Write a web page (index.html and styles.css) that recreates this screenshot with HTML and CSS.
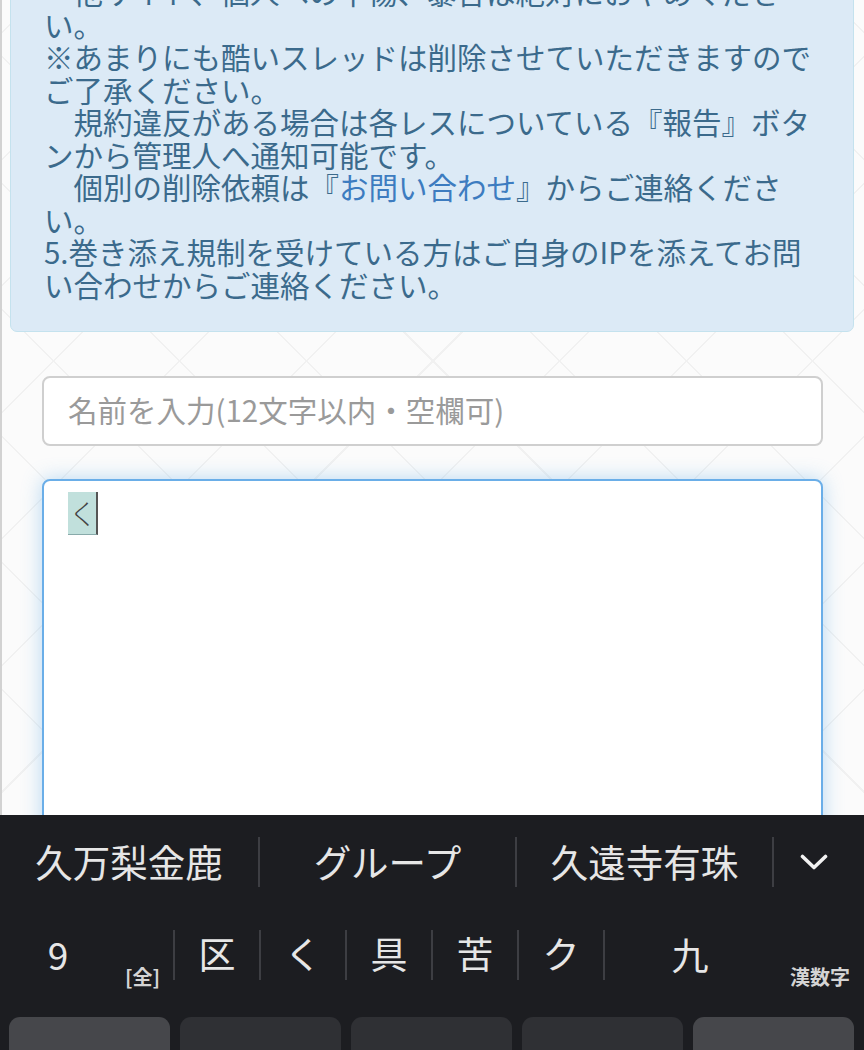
FILE: index.html
```html
<!DOCTYPE html>
<html lang="ja">
<head>
<meta charset="utf-8">
<title>書き込み</title>
<link rel="stylesheet" href="styles.css">
</head>
<body>
<div class="screen">
  <main class="page">
    <div class="content">
      <div class="notice">　他サイト、個人への中傷、暴言は絶対におやめください。<br>※あまりにも酷いスレッドは削除させていただきますのでご了承ください。<br>　規約違反がある場合は各レスについている『報告』ボタンから管理人へ通知可能です。<br>　個別の削除依頼は『<a class="link" href="#">お問い合わせ</a>』からご連絡ください。<br>5.巻き添え規制を受けている方はご自身のIPを添えてお問い合わせからご連絡ください。</div>
      <input class="field name" type="text" placeholder="名前を入力(12文字以内・空欄可)">
      <div class="field body-text"><span class="compose">く</span></div>
    </div>
  </main>
  <div class="keyboard">
    <div class="cands">
      <span class="cand">久万梨金鹿</span>
      <span class="div"></span>
      <span class="cand">グループ</span>
      <span class="div"></span>
      <span class="cand">久遠寺有珠</span>
      <span class="div"></span>
      <span class="cand chev"><svg width="28" height="17" viewBox="0 0 28 17"><polyline points="2.5,2.5 14,13.5 25.5,2.5" fill="none" stroke="#f2f2f2" stroke-width="3.6" stroke-linecap="round" stroke-linejoin="round"/></svg></span>
    </div>
    <div class="conv">
      <span class="seg first"><span class="big">9</span><span class="small">[全]</span></span>
      <span class="div"></span>
      <span class="seg">区</span>
      <span class="div"></span>
      <span class="seg">く</span>
      <span class="div"></span>
      <span class="seg">具</span>
      <span class="div"></span>
      <span class="seg">苦</span>
      <span class="div"></span>
      <span class="seg">ク</span>
      <span class="div"></span>
      <span class="seg last"><span class="big">九</span><span class="small">漢数字</span></span>
    </div>
    <div class="keys">
      <span class="key side"></span>
      <span class="key"></span>
      <span class="key"></span>
      <span class="key"></span>
      <span class="key side"></span>
    </div>
  </div>
</div>
</body>
</html>
```

FILE: styles.css
```css
html, body {
  margin: 0;
  padding: 0;
}

body {
  font-family: "Noto Sans CJK JP", "Noto Sans", sans-serif;
  background: #1c1d21;
}

.screen {
  width: 864px;
  height: 1050px;
  display: flex;
  flex-direction: column;
  overflow: hidden;
}

.page {
  flex: 1;
  overflow: hidden;
  border-left: 2px solid #d2d2d2;
  background-color: #fbfbfb;
  background-image:
    repeating-linear-gradient(45deg, transparent 0, transparent 88px, #f1f1f1 88px, #f1f1f1 89.5px),
    repeating-linear-gradient(-45deg, transparent 0, transparent 88px, #f1f1f1 88px, #f1f1f1 89.5px);
}

.content {
  margin-top: -53px;
  display: flex;
  flex-direction: column;
}

.notice {
  margin: 0 10px 0 8px;
  padding: 27px 33px 31px 33px;
  background: #dceaf6;
  border: 1px solid #c4e2ee;
  border-radius: 7px;
  color: #3b6a8c;
  font-size: 29.5px;
  line-height: 32.5px;
}

.link {
  color: #3d7cc0;
  text-decoration: none;
}

.field {
  box-sizing: border-box;
  margin: 0 41px 0 40px;
  background: #fff;
  border-radius: 8px;
  font-family: "Noto Sans CJK JP", "Noto Sans", sans-serif;
  font-size: 29.5px;
}

.name {
  margin-top: 44px;
  height: 70px;
  width: 781px;
  border: 2px solid #cfcfcf;
  padding: 0 0 4px 24px;
  color: #555;
  outline: none;
}

.name::placeholder {
  color: #9a9a9a;
}

.body-text {
  margin-top: 33px;
  height: 420px;
  border: 2px solid #6aaee8;
  box-shadow: 0 0 20px rgba(102, 175, 233, 0.45);
  padding: 11px 24px;
  line-height: 42px;
}

.compose {
  display: inline-block;
  width: 30px;
  height: 43px;
  background: #c1e0dc;
  border-right: 2px solid #555;
  border-bottom: 1px solid #8aa;
  box-sizing: border-box;
  color: #444;
  font-weight: 300;
  font-size: 28px;
  line-height: 42px;
  text-align: left;
  text-indent: 1px;
  vertical-align: top;
}

.keyboard {
  height: 235px;
  flex: none;
  background: #1c1d21;
  overflow: hidden;
  color: #e6e6e6;
}

.cands {
  height: 94px;
  display: flex;
  align-items: center;
}

.cand {
  width: 258px;
  text-align: center;
  font-size: 37.5px;
  line-height: 1;
  padding-bottom: 2px;
}

.cand:nth-child(3),
.cand:nth-child(5) {
  width: 255px;
}

.cand.chev {
  flex: 1;
  width: auto;
  display: flex;
  justify-content: center;
  padding-right: 10px;
  padding-top: 2px;
}

.div {
  width: 2px;
  height: 50px;
  background: #3d3e43;
  flex: none;
}

.conv {
  height: 92px;
  display: flex;
  align-items: center;
}

.seg {
  width: 84px;
  text-align: center;
  font-size: 37px;
  line-height: 1;
  padding-bottom: 3px;
}

.seg.first {
  width: 173px;
  display: flex;
  align-items: flex-end;
  padding-bottom: 0;
}

.seg.last {
  flex: 1;
  display: flex;
  align-items: flex-end;
  padding-bottom: 0;
}

.big {
  font-size: 37px;
  line-height: 50px;
  text-align: center;
  padding-bottom: 3px;
}

.first .big {
  width: 116px;
}

.last .big {
  width: 170px;
}

.small {
  font-size: 20px;
  line-height: 20px;
  color: #d4d4d4;
  font-weight: 700;
  margin-bottom: -5px;
}

.first .small {
  margin-left: 9px;
}

.last .small {
  margin-left: 15px;
}

.keys {
  margin-top: 16px;
  padding: 0 10px 0 9px;
  display: flex;
  gap: 10px;
}

.key {
  flex: 1;
  height: 60px;
  border-radius: 11px;
  background: #2f3034;
}

.key.side {
  background: #46474b;
}
```
